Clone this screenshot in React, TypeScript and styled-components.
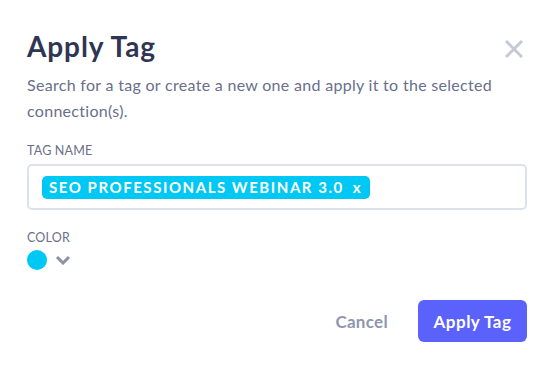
import React from "react";
import styled, { createGlobalStyle } from "styled-components";

const Global = createGlobalStyle`
  html, body { margin: 0; padding: 0; background: #ffffff; }
  body { font-family: "Lato", "Noto Sans", sans-serif; }
  * { box-sizing: border-box; }
`;

const Modal = styled.div`
  width: 557px;
  height: 369px;
  padding: 28px 30px 0 27px;
  display: flex;
  flex-direction: column;
  background: #fff;
`;

const Header = styled.div`
  display: flex;
  justify-content: space-between;
  align-items: flex-start;
`;

const Title = styled.h1`
  margin: 0;
  font-size: 28px;
  line-height: 36px;
  font-weight: 700;
  letter-spacing: 0.9px;
  color: #2f3552;
`;

const CloseButton = styled.button`
  border: 0;
  background: none;
  padding: 0;
  margin: 12px 4px 0 0;
  width: 18px;
  height: 18px;
  display: flex;
  cursor: pointer;
`;

const Subtitle = styled.p`
  margin: 8px 0 0;
  font-size: 16px;
  line-height: 26px;
  letter-spacing: 0.3px;
  color: #696f8c;
`;

const Label = styled.div<{ $top: number }>`
  margin-top: ${(p) => p.$top}px;
  font-size: 12.5px;
  line-height: 16px;
  font-weight: 400;
  letter-spacing: 0.2px;
  color: #6b7089;
  text-transform: uppercase;
`;

const InputBox = styled.div`
  margin-top: 5px;
  height: 46px;
  border: 2px solid #dde1ea;
  border-radius: 5px;
  padding: 0 13px;
  display: flex;
  align-items: center;
`;

const Chip = styled.span`
  display: inline-flex;
  align-items: center;
  height: 23px;
  padding: 0 9px 0 7px;
  border-radius: 5px;
  background: #00c8f5;
  color: #fff;
  font-size: 15px;
  font-weight: 700;
  letter-spacing: 1.55px;
  gap: 9px;
`;

const ChipX = styled.span`
  font-size: 15px;
  font-weight: 700;
  letter-spacing: 0;
`;

const ColorRow = styled.div`
  margin-top: 4px;
  display: flex;
  align-items: center;
  gap: 8px;
`;

const Swatch = styled.span<{ $color: string }>`
  width: 20px;
  height: 20px;
  border-radius: 50%;
  background: ${(p) => p.$color};
`;

const Footer = styled.div`
  margin-top: 30px;
  display: flex;
  justify-content: flex-end;
  align-items: center;
  gap: 30px;
`;

const CancelButton = styled.button`
  border: 0;
  background: none;
  padding: 0;
  font-family: inherit;
  font-size: 17px;
  font-weight: 700;
  letter-spacing: 0.3px;
  color: #8f96b0;
  cursor: pointer;
`;

const PrimaryButton = styled.button`
  border: 0;
  width: 109px;
  height: 42px;
  border-radius: 6px;
  background: #5a62fb;
  color: #fff;
  font-family: inherit;
  font-size: 17px;
  font-weight: 700;
  letter-spacing: 0.5px;
  cursor: pointer;
`;

export default function App() {
  return (
    <>
      <Global />
      <Modal>
        <Header>
          <Title>Apply Tag</Title>
          <CloseButton aria-label="Close">
            <svg width="18" height="18" viewBox="0 0 18 18">
              <path d="M1 1L17 17M17 1L1 17" stroke="#c6c9d5" strokeWidth="3" />
            </svg>
          </CloseButton>
        </Header>
        <Subtitle>
          Search for a tag or create a new one and apply it to the selected connection(s).
        </Subtitle>
        <Label $top={19}>Tag Name</Label>
        <InputBox>
          <Chip>
            SEO PROFESSIONALS WEBINAR 3.0
            <ChipX>x</ChipX>
          </Chip>
        </InputBox>
        <Label $top={20}>Color</Label>
        <ColorRow>
          <Swatch $color="#00c8f5" />
          <svg width="16" height="10" viewBox="0 0 16 10">
            <path d="M2 2L8 8L14 2" stroke="#8a91a9" strokeWidth="3" fill="none" />
          </svg>
        </ColorRow>
        <Footer>
          <CancelButton>Cancel</CancelButton>
          <PrimaryButton>Apply Tag</PrimaryButton>
        </Footer>
      </Modal>
    </>
  );
}
